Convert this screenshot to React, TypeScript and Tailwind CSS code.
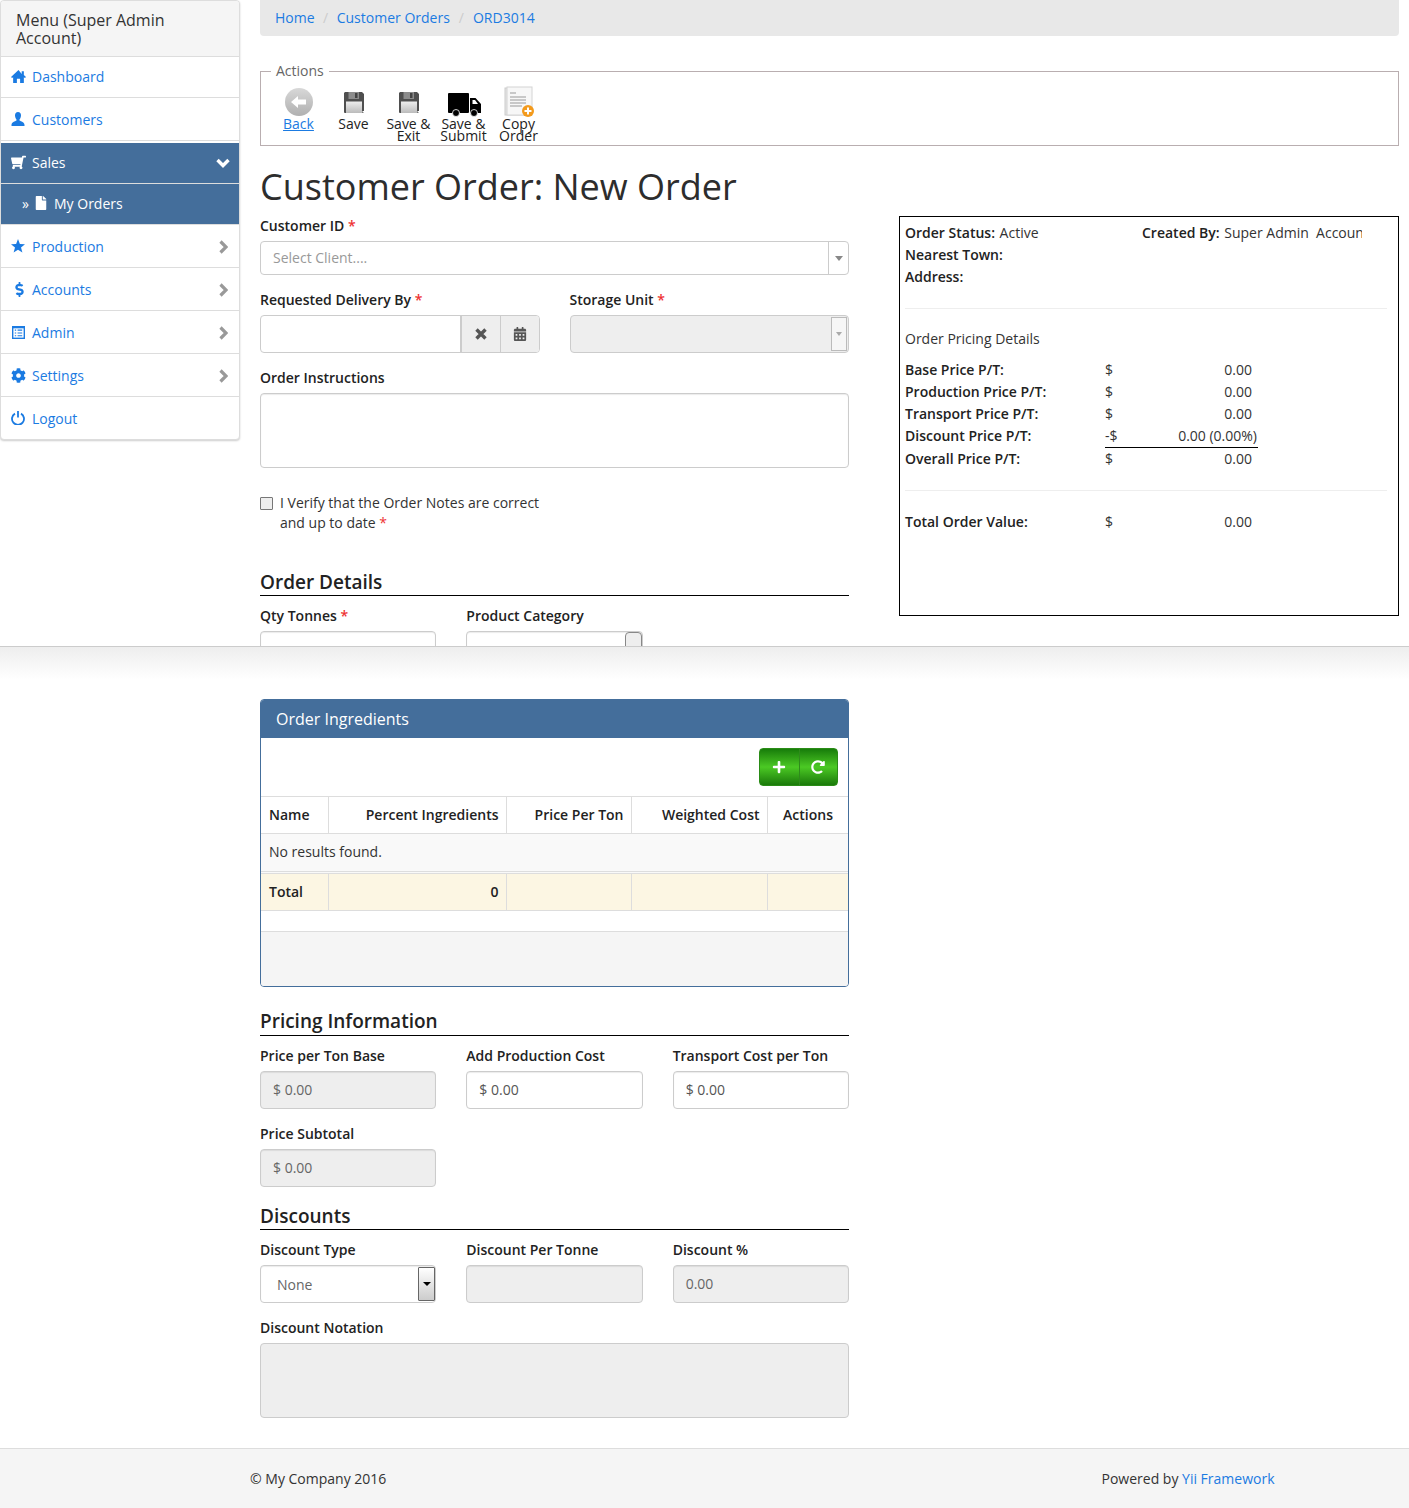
import type { ReactNode } from "react";
import { FaCalendarAlt, FaCog, FaDollarSign, FaFile, FaPlus, FaRedoAlt, FaShoppingCart } from "react-icons/fa";

const inputBase = "h-[38px] w-full rounded border border-[#ccc] shadow-[inset_0_1px_1px_rgba(0,0,0,0.08)] px-3 pb-px flex items-center";
const inputDisabled = "bg-[#eee] text-[#666]";

function Req() {
  return <span className="text-[#ee3333]"> *</span>;
}

function Label({ children }: { children: ReactNode }) {
  return <div className="h-[20px] leading-[20px] font-semibold text-[#222] mb-[5px]">{children}</div>;
}

function SectionTitle({ children, tight }: { children: ReactNode; tight?: boolean }) {
  return (
    <h3 className={`h-[27px] ${tight ? "leading-[26px]" : "leading-[28px]"} text-[19px] font-semibold text-[#222] border-b border-black box-content`}>
      {children}
    </h3>
  );
}

function HomeIcon() {
  return (
    <svg viewBox="0 0 14 14" className="w-[15px] h-[15px]" fill="currentColor">
      <path d="M7 1 0 7.5 1 8.5 2 7.6V13h3.5V9h3v4H12V7.6l1 .9 1-1-2-1.9V2h-2v2.7z" />
    </svg>
  );
}

function UserIcon() {
  return (
    <svg viewBox="0 0 14 14" className="w-[14px] h-[14px]" fill="currentColor">
      <path d="M7 0C5 0 4 1.6 4 3.4 4 5.2 5 7 5.5 7.5V8.5C4 9.5 .5 10 .5 13V14H13.5V13C13.5 10 10 9.5 8.5 8.5V7.5C9 7 10 5.2 10 3.4 10 1.6 9 0 7 0z" />
    </svg>
  );
}

function StarIcon() {
  return (
    <svg viewBox="0 0 14 14" className="w-[14px] h-[14px]" fill="currentColor">
      <polygon points="7,0 8.9,4.9 14,5.3 10,8.5 11.4,13.5 7,10.7 2.6,13.5 4,8.5 0,5.3 5.1,4.9" />
    </svg>
  );
}

function ListIcon() {
  return (
    <svg viewBox="0 0 14 14" className="w-[13px] h-[13px] ml-px">
      <rect width="14" height="14" fill="currentColor" />
      <rect x="1.5" y="2.5" width="11" height="10" fill="#fff" />
      <path d="M3 4.5h1.5M6 4.5h5M3 7.5h1.5M6 7.5h5M3 10.5h1.5M6 10.5h5" stroke="currentColor" strokeWidth="1.2" />
    </svg>
  );
}

function PowerIcon() {
  return (
    <svg viewBox="0 0 14 14" className="w-[14px] h-[14px]" fill="none" stroke="currentColor" strokeWidth="1.8">
      <path d="M4 2.6A6 6 0 1 0 10 2.6" />
      <path d="M7 0v6.5" />
    </svg>
  );
}

function TruckIcon() {
  return (
    <svg viewBox="0 0 33 24" className="w-[33px] h-[24px] mt-[6px] ml-px">
      <rect x="0" y="0" width="21" height="20" rx="1" fill="#000" />
      <path d="M22 5h5.500l5.500 6v9H22z" fill="#000" />
      <path d="M24.500 7h2.500l3 4h-5.500z" fill="#fff" />
      <circle cx="8" cy="20" r="3.500" fill="#000" stroke="#fff" strokeWidth="0.8" />
      <circle cx="26" cy="20" r="3.500" fill="#000" stroke="#fff" strokeWidth="0.8" />
    </svg>
  );
}

function ChevronRight() {
  return (
    <svg viewBox="0 0 10 14" className="ml-auto mt-px w-[10px] h-[14px]" fill="none" stroke="#999" strokeWidth="3.2">
      <path d="M2.5 1.5 8 7 2.5 12.5" />
    </svg>
  );
}

function MenuRow({
  icon,
  label,
  arrow,
  h = "h-[43px]",
}: {
  icon: ReactNode;
  label: string;
  arrow?: boolean;
  h?: string;
}) {
  return (
    <div className={`${h} flex items-center pl-[10px] pr-[11px] border-b border-[#ddd] text-[#1b7be2]`}>
      <span className="w-[21px] flex justify-start text-[14px]">{icon}</span>
      <span>{label}</span>
      {arrow && <ChevronRight />}
    </div>
  );
}

function Sidebar() {
  return (
    <aside className="w-[240px] shrink-0">
      <div className="rounded border border-[#ddd] shadow-[0_1px_2px_rgba(0,0,0,0.2)] overflow-hidden bg-white">
        <div className="h-[56px] bg-[#f5f5f5] border-b border-[#ddd] pl-[15px] pt-[10px] text-[16px] leading-[18px] text-[#333]">
          Menu (Super Admin
          <br />
          Account)
        </div>
        <MenuRow h="h-[41px] pb-[2px]" icon={<HomeIcon />} label="Dashboard" />
        <MenuRow h="h-[43px]" icon={<UserIcon />} label="Customers" />
        <div className="pt-[2px] border-b border-[#ddd]">
          <div className="h-[41px] pb-px bg-[#446e9b] text-white flex items-center pl-[10px] pr-[9px] border-b border-[#ddd] box-border">
            <span className="w-[21px]">
              <FaShoppingCart className="-scale-x-100 text-[15px]" />
            </span>
            <span>Sales</span>
            <svg viewBox="0 0 14 10" className="ml-auto w-[14px] h-[10px]" fill="none" stroke="#fff" strokeWidth="3.4">
              <path d="M1.5 2 7 7.5 12.5 2" />
            </svg>
          </div>
          <div className="h-[40px] pb-[2px] bg-[#446e9b] text-white flex items-center pl-[21px]">
            <span className="w-[12px]">»</span>
            <span className="w-[20px]">
              <FaFile className="text-[14px]" />
            </span>
            <span>My Orders</span>
          </div>
        </div>
        <MenuRow icon={<StarIcon />} label="Production" arrow />
        <MenuRow icon={<FaDollarSign className="ml-px text-[15px]" />} label="Accounts" arrow />
        <MenuRow icon={<ListIcon />} label="Admin" arrow />
        <MenuRow icon={<FaCog className="text-[15px]" />} label="Settings" arrow />
        <div className="h-[42px] flex items-center pl-[10px] text-[#1b7be2]">
          <span className="w-[21px]">
            <PowerIcon />
          </span>
          <span>Logout</span>
        </div>
      </div>
    </aside>
  );
}

function Floppy({ id }: { id: string }) {
  return (
    <svg viewBox="0 0 24 24" className="w-[24px] h-[24px]">
      <defs>
        <linearGradient id={id} x1="0" y1="0" x2="0" y2="1">
          <stop offset="0" stopColor="#eee" />
          <stop offset="1" stopColor="#bbb" />
        </linearGradient>
      </defs>
      <path d="M3 2h17l2 2v18a1 1 0 0 1-1 1H3a1 1 0 0 1-1-1V3z" fill="#4f4f4f" />
      <rect x="6.5" y="2" width="10.5" height="7" fill="#8c8c8c" />
      <rect x="13" y="3" width="2.5" height="5" fill="#444" />
      <rect x="4" y="11.5" width="16" height="11.5" fill={`url(#${id})`} />
      <rect x="20.5" y="21" width="1.5" height="1.5" fill="#fff" />
    </svg>
  );
}

function ActionItem({ icon, children }: { icon: ReactNode; children: ReactNode }) {
  return (
    <div className="w-[55px] flex flex-col items-center text-center leading-[12px] text-[#222]">
      <div className="h-[30px] flex items-center justify-center">{icon}</div>
      <div className="mt-[1px]">{children}</div>
    </div>
  );
}

function Actions() {
  return (
    <fieldset className="mt-[27px] h-[83px] border border-[#b9aeb0] pl-[10px]">
      <legend className="px-[5px] text-[#666] leading-[16px]">Actions</legend>
      <div className="flex mt-[8px]">
        <ActionItem
          icon={
            <svg viewBox="0 0 30 30" className="w-[30px] h-[30px]">
              <defs>
                <linearGradient id="backG" x1="0" y1="0" x2="0" y2="1">
                  <stop offset="0" stopColor="#d8d8d8" />
                  <stop offset="1" stopColor="#b0b0b0" />
                </linearGradient>
              </defs>
              <circle cx="15" cy="15" r="14" fill="url(#backG)" />
              <path d="M7 15l7-6v3.5h8v5h-8V21z" fill="#fff" />
            </svg>
          }
        >
          <span className="underline text-[#1b7be2]">Back</span>
        </ActionItem>
        <ActionItem icon={<Floppy id="flopA" />}>Save</ActionItem>
        <ActionItem icon={<Floppy id="flopB" />}>
          Save &amp;
          <br />
          Exit
        </ActionItem>
        <ActionItem icon={<TruckIcon />}>
          Save &amp;
          <br />
          Submit
        </ActionItem>
        <ActionItem
          icon={
            <svg viewBox="0 0 32 32" className="w-[32px] h-[32px]">
              <rect x="2" y="2" width="24" height="27" fill="#e4e4e4" stroke="#ccc" />
              <rect x="4" y="1" width="25" height="28" fill="#f7f7f7" stroke="#d4d4d4" />
              <path d="M7 7h6M7 11h16M7 14h16M7 17h16M7 20h12" stroke="#999" strokeWidth="1" />
              <circle cx="25" cy="25" r="6" fill="#f39a1c" />
              <path d="M25 21.5v7M21.5 25h7" stroke="#fff" strokeWidth="2" />
            </svg>
          }
        >
          Copy
          <br />
          Order
        </ActionItem>
      </div>
    </fieldset>
  );
}

function PriceRow({ label, sign = "$", value, under }: { label: string; sign?: string; value: string; under?: boolean }) {
  return (
    <div className="grid grid-cols-[200px_153px] h-[22px] leading-[22px]">
      <b className="font-semibold text-[#222]">{label}</b>
      <div className={`flex justify-between ${under ? "border-b border-black h-[23px] pr-px" : "pr-[6px]"}`}>
        <span>{sign}</span>
        <span>{value}</span>
      </div>
    </div>
  );
}

function SummaryPanel() {
  return (
    <div className="w-[500px] h-[400px] border border-black px-[5px] pt-[5px] text-[#333]">
      <div className="grid grid-cols-[237px_220px] h-[22px] leading-[22px]">
        <div>
          <b className="font-semibold text-[#222] mr-px">Order Status:</b> Active
        </div>
        <div className="overflow-hidden whitespace-nowrap">
          <b className="font-semibold text-[#222] mr-px">Created By:</b> Super Admin&nbsp; Account
        </div>
      </div>
      <div className="h-[22px] leading-[22px] font-semibold text-[#222]">Nearest Town:</div>
      <div className="h-[22px] leading-[22px] font-semibold text-[#222]">Address:</div>
      <hr className="mt-[20px] mr-[6px] border-[#eee]" />
      <div className="mt-[20px] h-[20px] leading-[20px]">Order Pricing Details</div>
      <div className="mt-[10px]">
        <PriceRow label="Base Price P/T:" value="0.00" />
        <PriceRow label="Production Price P/T:" value="0.00" />
        <PriceRow label="Transport Price P/T:" value="0.00" />
        <PriceRow label="Discount Price P/T:" sign="-$" value="0.00 (0.00%)" under />
        <div className="h-px" />
        <PriceRow label="Overall Price P/T:" value="0.00" />
      </div>
      <hr className="mt-[20px] mr-[6px] border-[#eee]" />
      <div className="mt-[20px]">
        <PriceRow label="Total Order Value:" value="0.00" />
      </div>
    </div>
  );
}

function OrderForm() {
  return (
    <div className="w-[589px]">
      <Label>
        Customer ID
        <Req />
      </Label>
      <div className="h-[34px] rounded border border-[#ccc] flex items-center pl-3 text-[#999]">
        <span className="flex-1 pb-px">Select Client....</span>
        <span className="w-[20px] h-full border-l border-[#ccc] flex items-center justify-center">
          <span className="border-x-[4px] border-x-transparent border-t-[5px] border-t-[#888]" />
        </span>
      </div>
      <div className="grid grid-cols-[280px_279.5px] gap-x-[29.5px] mt-[15px]">
        <div>
          <Label>
            Requested Delivery By
            <Req />
          </Label>
          <div className="h-[38px] flex rounded border border-[#ccc] overflow-hidden">
            <div className="flex-1 border-r border-[#ccc]" />
            <div className="w-[39px] bg-[#eee] border-l border-[#ccc] flex items-center justify-center">
              <svg viewBox="0 0 12 12" className="w-[12px] h-[12px]" fill="none" stroke="#555" strokeWidth="3.4">
                <path d="M1.5 1.5 10.5 10.5M10.5 1.5 1.5 10.5" />
              </svg>
            </div>
            <div className="w-[39px] bg-[#eee] border-l border-[#ccc] flex items-center justify-center text-[#555] text-[14px]">
              <FaCalendarAlt />
            </div>
          </div>
        </div>
        <div>
          <Label>
            Storage Unit
            <Req />
          </Label>
          <div className="h-[38px] flex justify-end rounded border border-[#ccc] bg-[#eee]">
            <div className="w-[16px] m-px bg-[#f6f6f6] border border-[#bbb] flex items-center justify-center">
              <span className="border-x-[3px] border-x-transparent border-t-[4px] border-t-[#aaa]" />
            </div>
          </div>
        </div>
      </div>
      <div className="mt-[15px]">
        <Label>Order Instructions</Label>
      </div>
      <div className="h-[75px] rounded border border-[#ccc] shadow-[inset_0_1px_1px_rgba(0,0,0,0.08)]" />
      <div className="mt-[25px] flex items-start">
        <span className="mt-[4px] w-[13px] h-[13px] bg-[#eee] border border-[#777] rounded-[1px] shrink-0" />
        <div className="ml-[7px] leading-[20px]">
          I Verify that the Order Notes are correct
          <br />
          and up to date
          <Req />
        </div>
      </div>
      <div className="mt-[35px]">
        <SectionTitle>Order Details</SectionTitle>
      </div>
      <div className="grid grid-cols-3 gap-x-[30px] mt-[10px]">
        <div>
          <Label>
            Qty Tonnes
            <Req />
          </Label>
          <div className={inputBase} />
        </div>
        <div>
          <Label>Product Category</Label>
          <div className={`${inputBase} justify-end !pr-0 !pb-0`}>
            <span className="w-[17px] h-full bg-[#eee] border border-[#888] rounded-sm" />
          </div>
        </div>
      </div>
    </div>
  );
}

function Ingredients() {
  const cell = "border-r border-[#ddd] px-2";
  const numCell = "border-r border-[#ddd] pl-2 pr-[7px] text-right";
  return (
    <div className="w-[589px] h-[288px] rounded border border-[#446e9b] overflow-hidden flex flex-col">
      <div className="h-[38px] -mt-px bg-[#446e9b] text-white text-[16px] flex items-center pl-[15px] shrink-0 box-content pt-px">
        Order Ingredients
      </div>
      <div className="h-[58px] flex items-start justify-end pt-[10px] pr-[10px] shrink-0">
        <div className="h-[38px] w-[79px] rounded flex text-white bg-gradient-to-b from-[#177d0a] via-[#4bc924] to-[#1a7a0a] border border-[#2a8c16]">
          <div className="flex-1 flex items-center justify-center border-r border-[#2f8a1c] text-[14px] pr-px pb-px">
            <FaPlus />
          </div>
          <div className="flex-1 flex items-center justify-center text-[14px] pb-px">
            <FaRedoAlt />
          </div>
        </div>
      </div>
      <table className="w-full border-collapse table-fixed shrink-0 text-[#222]">
        <colgroup>
          <col className="w-[67px]" />
          <col className="w-[178px]" />
          <col className="w-[125px]" />
          <col className="w-[136px]" />
          <col />
        </colgroup>
        <thead>
          <tr className="h-[37px] border-y border-[#ddd] font-semibold">
            <td className={`${cell} pb-[2px]`}>Name</td>
            <td className={`${numCell} pb-[2px]`}>Percent Ingredients</td>
            <td className={`${numCell} pb-[2px]`}>Price Per Ton</td>
            <td className={`${numCell} pb-[2px]`}>Weighted Cost</td>
            <td className="pl-2 pb-[2px] text-right pr-[15px]">Actions</td>
          </tr>
        </thead>
        <tbody>
          <tr className="h-[39px] bg-[#f9f9f9] border-b-[3px] border-double border-[#ddd]">
            <td colSpan={5} className="px-2 pb-[2px] text-[#333]">
              No results found.
            </td>
          </tr>
          <tr className="h-[38px] bg-[#fcf6e3] border-b border-[#ddd] font-semibold">
            <td className={`${cell} pb-[2px]`}>Total</td>
            <td className={`${numCell} pb-[2px]`}>0</td>
            <td className={cell} />
            <td className={cell} />
            <td />
          </tr>
        </tbody>
      </table>
      <div className="h-[21px] shrink-0 border-b border-[#ddd] box-content -mt-px" />
      <div className="flex-1 bg-[#f5f5f5]" />
    </div>
  );
}

function Money({ disabled }: { disabled?: boolean }) {
  return <div className={`${inputBase} ${disabled ? inputDisabled : "text-[#555]"}`}>$ 0.00</div>;
}

function LowerForm() {
  return (
    <div className="w-[589px]">
      <div className="mt-[21px]">
        <SectionTitle tight>Pricing Information</SectionTitle>
      </div>
      <div className="grid grid-cols-3 gap-x-[30px] mt-[10px]">
        <div>
          <Label>Price per Ton Base</Label>
          <Money disabled />
        </div>
        <div>
          <Label>Add Production Cost</Label>
          <Money />
        </div>
        <div>
          <Label>Transport Cost per Ton</Label>
          <Money />
        </div>
      </div>
      <div className="grid grid-cols-3 gap-x-[30px] mt-[15px]">
        <div>
          <Label>Price Subtotal</Label>
          <Money disabled />
        </div>
      </div>
      <div className="mt-[15px]">
        <SectionTitle>Discounts</SectionTitle>
      </div>
      <div className="grid grid-cols-3 gap-x-[30px] mt-[10px]">
        <div>
          <Label>Discount Type</Label>
          <div className={`${inputBase} justify-between !pr-0 !pl-4 !pb-0 text-[#666]`}>
            <span>None</span>
            <span className="w-[17px] h-[34px] border border-[#666] rounded-[1px] bg-gradient-to-b from-[#fff] to-[#ccc] flex items-center justify-center">
              <span className="border-x-[4px] border-x-transparent border-t-[4px] border-t-black" />
            </span>
          </div>
        </div>
        <div>
          <Label>Discount Per Tonne</Label>
          <div className={`${inputBase} ${inputDisabled}`} />
        </div>
        <div>
          <Label>Discount %</Label>
          <div className={`${inputBase} ${inputDisabled}`}>0.00</div>
        </div>
      </div>
      <div className="mt-[15px]">
        <Label>Discount Notation</Label>
      </div>
      <div className={`${inputDisabled} h-[75px] rounded border border-[#ccc]`} />
    </div>
  );
}

export default function App() {
  return (
    <div className="h-[1508px] bg-white text-[14px] text-[#333] font-['Open_Sans',sans-serif] flex flex-col overflow-hidden">
      <div className="h-[646px] shrink-0 overflow-hidden flex gap-[20px] pr-[10px]">
        <Sidebar />
        <main className="flex-1 min-w-0">
          <div className="h-[36px] pb-[2px] bg-[#e8e8e8] rounded-b flex items-center pl-[15px] text-[#1b7be2]">
            Home<span className="text-[#ccc] px-[8.5px]">/</span>Customer Orders<span className="text-[#ccc] px-[9px]">/</span>ORD3014
          </div>
          <Actions />
          <h1 className="mt-[16px] h-[50px] leading-[50px] text-[36px] text-[#2d2d2d]">Customer Order: New Order</h1>
          <div className="mt-[4px] flex justify-between items-start">
            <OrderForm />
            <SummaryPanel />
          </div>
        </main>
      </div>
      <div className="h-[34px] shrink-0 border-t border-[#ccc] bg-gradient-to-b from-[#eee] to-white" />
      <div className="pl-[260px] pt-[19px] flex-1">
        <Ingredients />
        <LowerForm />
      </div>
      <footer className="h-[60px] shrink-0 border-t border-[#ddd] bg-[#f5f5f5] flex items-center justify-between pl-[250px] pr-[134.5px]">
        <span>© My Company 2016</span>
        <span>
          Powered by <span className="text-[#1b7be2]">Yii Framework</span>
        </span>
      </footer>
    </div>
  );
}
